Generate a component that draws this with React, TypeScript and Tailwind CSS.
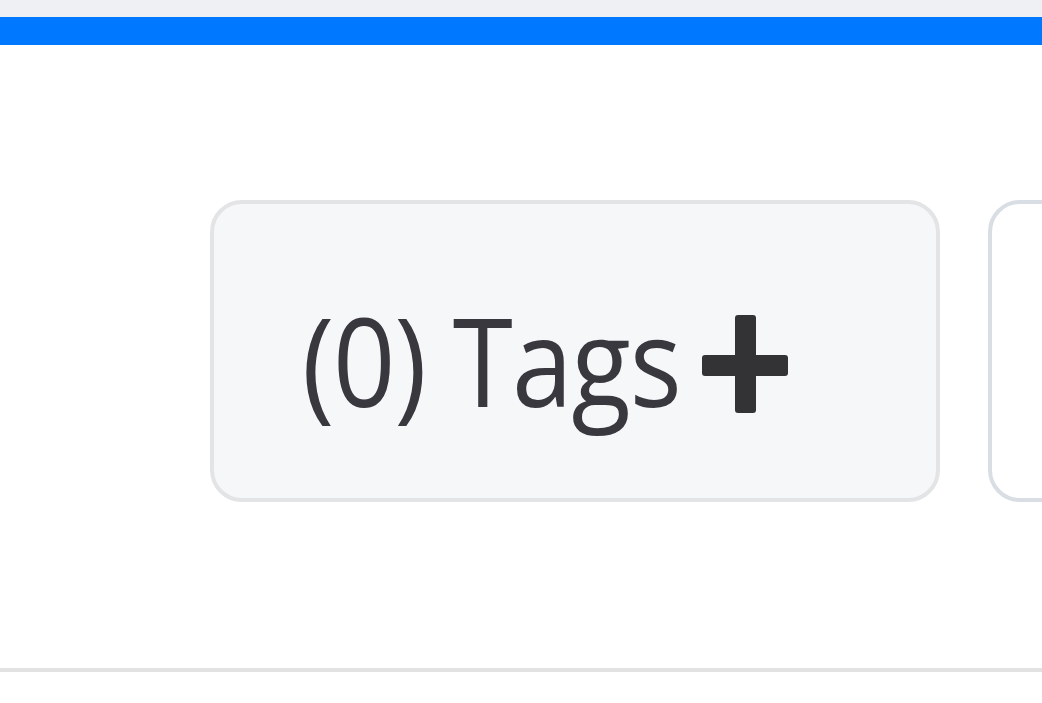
import React from "react";

export default function App() {
  return (
    <div className="w-[1042px] h-[703px] bg-white overflow-hidden flex flex-col" style={{ fontFamily: '"Open Sans", "Noto Sans", sans-serif' }}>
      <div className="h-[17px] bg-[#eef0f3] shrink-0" />
      <div className="h-[28px] bg-[#0078ff] shrink-0" />
      <div className="flex items-start gap-[48px] pl-[210px] pt-[155px] h-[623px] shrink-0">
        <button className="w-[730px] h-[302px] shrink-0 rounded-[32px] border-[4px] border-[#e3e4e6] bg-[#f6f7f9] flex items-center pl-[88px] pt-[18px]">
          <span className="inline-block w-[376px] text-left origin-left scale-x-[0.895] text-[122px] leading-none text-[#38383e] tracking-[-0.01em] whitespace-nowrap">(0) Tags</span>
          <svg width="86" height="98" viewBox="0 0 86 98" className="ml-[24px] mt-[8px] shrink-0">
            <rect x="33" y="0" width="21" height="98" rx="3" fill="#333336" />
            <rect x="0" y="40" width="86" height="21" rx="3" fill="#333336" />
          </svg>
        </button>
        <div className="w-[200px] h-[302px] shrink-0 rounded-[32px] border-[4px] border-[#d9dde4] bg-white" />
      </div>
      <div className="h-[4px] bg-[#e2e2e2] shrink-0" />
    </div>
  );
}
